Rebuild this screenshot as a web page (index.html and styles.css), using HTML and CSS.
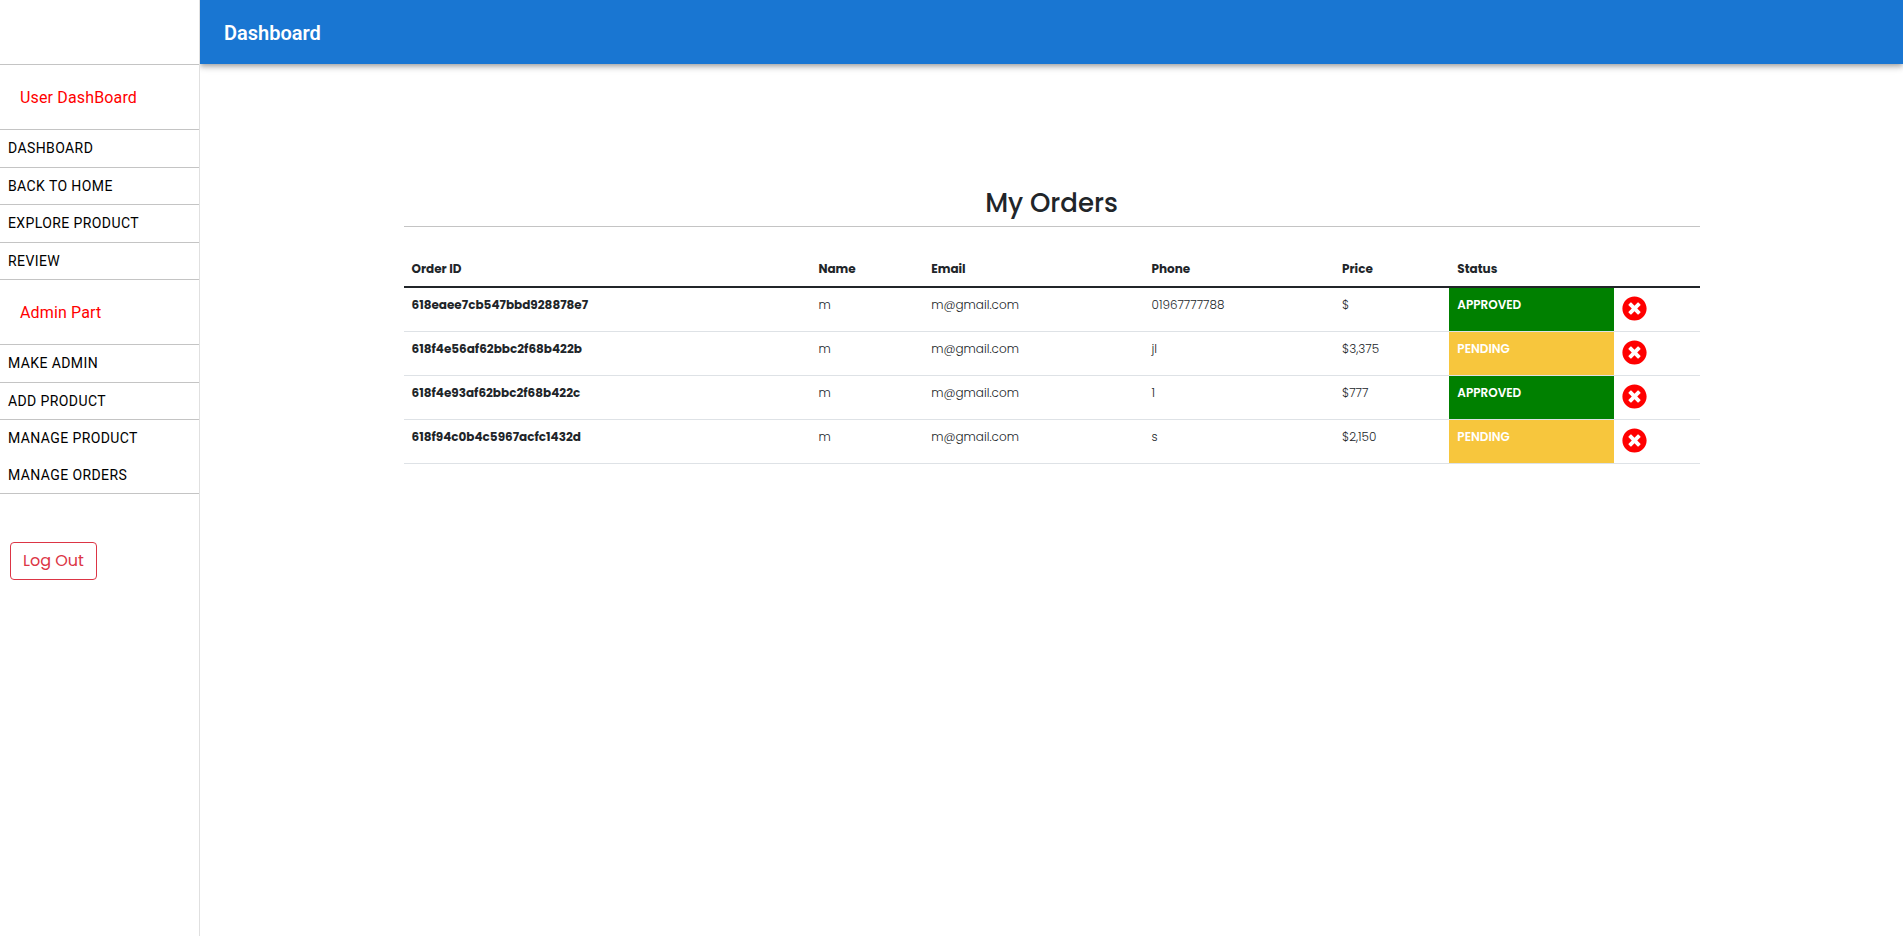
FILE: index.html
```html
<!DOCTYPE html>
<html lang="en">
<head>
<meta charset="utf-8">
<title>Dashboard</title>
<link rel="stylesheet" href="styles.css">
</head>
<body>
<svg class="sprite" aria-hidden="true">
  <symbol id="times-circle" viewBox="0 0 512 512">
    <path d="M256 8C119 8 8 119 8 256s111 248 248 248 248-111 248-248S393 8 256 8zm121.600 313.100c4.700 4.700 4.700 12.300 0 17L338 377.600c-4.700 4.700-12.300 4.700-17 0L256 312l-65.100 65.600c-4.700 4.700-12.300 4.700-17 0L134.400 338c-4.700-4.700-4.700-12.300 0-17l65.600-65-65.600-65.100c-4.700-4.700-4.700-12.300 0-17l39.600-39.600c4.700-4.700 12.300-4.700 17 0l65 65.700 65.100-65.600c4.700-4.700 12.300-4.700 17 0l39.600 39.600c4.700 4.700 4.700 12.300 0 17L312 256l65.600 65.100z"/>
  </symbol>
</svg>
<div class="layout">
  <aside class="sidebar">
    <div class="sidebar-top"></div>
    <nav>
      <h2 class="group-title">User DashBoard</h2>
      <ul class="menu">
        <li><a href="#">Dashboard</a></li>
        <li><a href="#">Back to Home</a></li>
        <li><a href="#">Explore Product</a></li>
        <li><a href="#">Review</a></li>
      </ul>
      <h2 class="group-title">Admin Part</h2>
      <ul class="menu">
        <li><a href="#">Make Admin</a></li>
        <li><a href="#">Add Product</a></li>
        <li class="joined"><a href="#">Manage Product</a></li>
        <li><a href="#">Manage Orders</a></li>
      </ul>
    </nav>
    <button class="logout" type="button">Log Out</button>
  </aside>
  <div class="page">
    <header class="appbar"><h1 class="appbar-title">Dashboard</h1></header>
    <main class="content">
      <h2 class="title">My Orders</h2>
      <table class="orders">
        <colgroup>
          <col class="col-id"><col class="col-name"><col class="col-email"><col class="col-phone"><col class="col-price"><col class="col-status"><col>
        </colgroup>
        <thead>
          <tr><th scope="col">Order ID</th><th scope="col">Name</th><th scope="col">Email</th><th scope="col">Phone</th><th scope="col">Price</th><th scope="col">Status</th><td></td></tr>
        </thead>
        <tbody>
          <tr><th scope="row">618eaee7cb547bbd928878e7</th><td>m</td><td>m@gmail.com</td><td>01967777788</td><td>$</td><td class="status approved">APPROVED</td><td><button class="remove" type="button" aria-label="Delete order"><svg><use href="#times-circle"/></svg></button></td></tr>
          <tr><th scope="row">618f4e56af62bbc2f68b422b</th><td>m</td><td>m@gmail.com</td><td>jl</td><td>$3,375</td><td class="status pending">PENDING</td><td><button class="remove" type="button" aria-label="Delete order"><svg><use href="#times-circle"/></svg></button></td></tr>
          <tr><th scope="row">618f4e93af62bbc2f68b422c</th><td>m</td><td>m@gmail.com</td><td>1</td><td>$777</td><td class="status approved">APPROVED</td><td><button class="remove" type="button" aria-label="Delete order"><svg><use href="#times-circle"/></svg></button></td></tr>
          <tr><th scope="row">618f94c0b4c5967acfc1432d</th><td>m</td><td>m@gmail.com</td><td>s</td><td>$2,150</td><td class="status pending">PENDING</td><td><button class="remove" type="button" aria-label="Delete order"><svg><use href="#times-circle"/></svg></button></td></tr>
        </tbody>
      </table>
    </main>
  </div>
</div>
</body>
</html>
```
FILE: styles.css
```css
* { box-sizing: border-box; }
body {
  margin: 0;
  background: #fff;
  color: #212529;
  font-family: Poppins, Inter, sans-serif;
}
.sprite { display: none; }
.layout { display: flex; min-height: 100vh; }

.sidebar {
  flex: 0 0 200px;
  border-right: 1px solid #e0e0e0;
  font-family: Roboto, sans-serif;
}
.sidebar-top { height: 65px; border-bottom: 1px solid #c4c4c4; }
.group-title {
  margin: 0;
  padding: 21px 20px 19px;
  border-bottom: 1px solid #c4c4c4;
  color: #f00;
  font-size: 16px;
  font-weight: 400;
  line-height: 24px;
  letter-spacing: 0.00938em;
}
.menu { margin: 0; padding: 0; list-style: none; }
.menu li { border-bottom: 1px solid #c4c4c4; }
.menu .joined { border-bottom: 0; }
.menu a {
  display: block;
  padding: 6px 8px;
  color: #000;
  font-size: 14px;
  line-height: 1.75;
  letter-spacing: 0.02857em;
  text-decoration: none;
  text-transform: uppercase;
}
.logout {
  margin: 48px 10px;
  padding: 6px 12px;
  border: 1px solid #dc3545;
  border-radius: 4px;
  background: transparent;
  color: #dc3545;
  font-family: Poppins, Inter, sans-serif;
  font-size: 16px;
  line-height: 24px;
}

.page { flex: 1; min-width: 0; }
.appbar {
  display: flex;
  align-items: center;
  height: 64px;
  padding: 2px 24px 0;
  background: #1976d2;
  color: #fff;
  box-shadow: 0 2px 4px -1px rgba(0,0,0,.2), 0 4px 5px 0 rgba(0,0,0,.14), 0 1px 10px 0 rgba(0,0,0,.12);
  clip-path: inset(0 0 -16px 0);
}
.appbar-title {
  margin: 0;
  font-family: Roboto, sans-serif;
  font-size: 20px;
  font-weight: 600;
  line-height: 32px;
}
.content { max-width: 1344px; margin: 0 auto; padding: 122px 24px 24px; }
.title {
  margin: 0 0 25px;
  padding-bottom: 6px;
  border-bottom: 1px solid #c4c4c4;
  font-size: 26px;
  font-weight: 500;
  line-height: 34px;
  text-align: center;
}
.orders {
  width: 100%;
  table-layout: fixed;
  border-collapse: separate;
  border-spacing: 0;
  font-size: 12px;
  line-height: 18px;
}
.col-id { width: 31.4%; }
.col-name { width: 8.7%; }
.col-email { width: 17%; }
.col-phone { width: 14.7%; }
.col-price { width: 8.9%; }
.col-status { width: 12.7%; }
.orders th, .orders td {
  height: 44px;
  padding: 8px;
  border-bottom: 1px solid #dee2e6;
  text-align: left;
  vertical-align: top;
}
.orders td { font-weight: 300; }
.orders th { font-weight: 700; }
.orders thead th, .orders thead td { height: 36px; border-bottom: 2px solid #212529; }
.orders .status { color: #fff; font-weight: 600; }
.approved { background: #008000; }
.pending { background: #f7c63d; }
.remove { display: block; padding: 0; border: 0; background: none; color: #f00; }
.remove svg { display: block; width: 25px; height: 25px; fill: currentColor; }
```
